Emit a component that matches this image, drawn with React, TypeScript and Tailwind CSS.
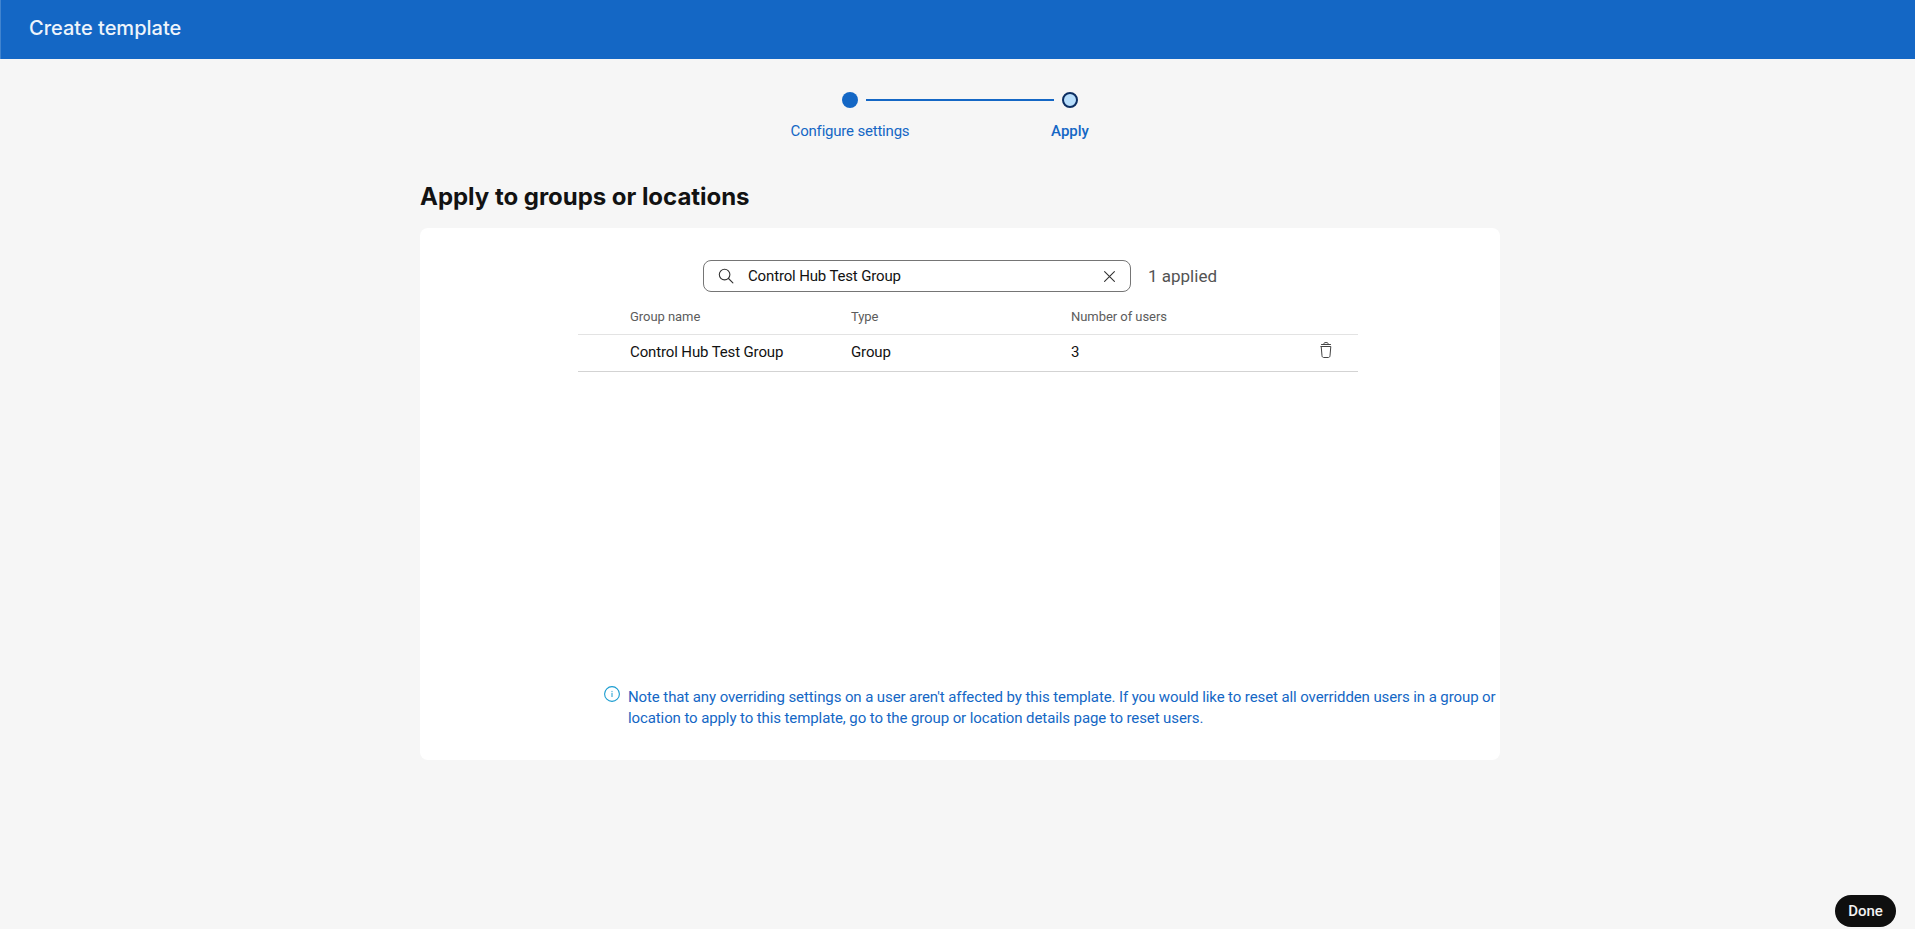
import React from "react";

const groups = [{ name: "Control Hub Test Group", type: "Group", users: 3 }];

export default function App() {
  return (
    <div className="h-screen w-full flex flex-col bg-[#f6f6f6] text-[#121212] font-['Roboto',sans-serif] overflow-hidden">
      {/* Header */}
      <header className="h-[59px] shrink-0 bg-[#1467c5] border-l border-[#4184cf] pl-[28px] pt-[14px]">
        <h1 className="text-xl leading-7 font-medium text-[#eef4fb] font-['Inter',sans-serif]">Create template</h1>
      </header>

      {/* Stepper */}
      <div className="ml-[740px] mt-[33px] flex shrink-0">
        <Step label="Configure settings" />
        <Step label="Apply" current />
      </div>

      {/* Content */}
      <main className="ml-[420px] mt-[40px] w-[1080px] shrink-0">
        <h2 className="text-2xl leading-8 font-bold tracking-[-0.03px] font-['Inter',sans-serif]">Apply to groups or locations</h2>

        <section className="mt-[15px] h-[532px] rounded-lg bg-white pt-8 flex flex-col">
          <div className="ml-[283px] flex items-center">
            <div className="w-[428px] h-8 shrink-0 flex items-center rounded-lg border border-[#757575] pl-[14px] pr-[15px]">
              <SearchIcon />
              <span className="ml-[14px] flex-1 text-[15px] leading-5 tracking-[-0.15px]">Control Hub Test Group</span>
              <CloseIcon />
            </div>
            <span className="ml-[17px] text-[17px] leading-5 text-[#535353]">1 applied</span>
          </div>

          <div className="ml-[158px] w-[780px]">
            <div className="h-[43px] pt-[7px] flex items-center pl-[52px] border-b border-[#e3e3e3] text-[13px] tracking-[-0.05px] text-[#5c5c5c]">
              <span className="w-[221px]">Group name</span>
              <span className="w-[220px]">Type</span>
              <span>Number of users</span>
            </div>
            {groups.map((g) => (
              <div key={g.name} className="h-[37px] pb-[2px] flex items-center pl-[52px] pr-[24px] border-b border-[#d3d3d3] text-[15px] tracking-[-0.13px]">
                <span className="w-[221px]">{g.name}</span>
                <span className="w-[220px]">{g.type}</span>
                <span className="flex-1">{g.users}</span>
                <TrashIcon />
              </div>
            ))}
          </div>

          <div className="mt-auto mb-[31px] ml-[184px] flex items-start text-[#1467c5]">
            <InfoIcon />
            <p className="ml-2 pt-px text-[15px] leading-[21px] tracking-[-0.1px] whitespace-nowrap">
              Note that any overriding settings on a user aren't affected by this template. If you would like to reset all overridden users in a group or
              <br />
              location to apply to this template, go to the group or location details page to reset users.
            </p>
          </div>
        </section>
      </main>

      {/* Footer */}
      <footer className="mt-auto mb-[2px] mr-[19px] flex justify-end">
        <button className="w-[61px] h-8 rounded-full bg-[#0f0f0f] text-[15px] font-medium text-[#f3f3f3]">Done</button>
      </footer>
    </div>
  );
}

function Step({ label, current = false }: { label: string; current?: boolean }) {
  return (
    <div className="w-[220px] flex flex-col">
      <div className="h-4 flex items-center pl-[102px]">
        <div className={`w-4 h-4 shrink-0 rounded-full ${current ? "bg-[#b8defc] border-2 border-[#0d2f63]" : "bg-[#1467c5]"}`}></div>
        {!current && <div className="ml-2 w-[188px] h-0.5 shrink-0 bg-[#1467c5] -mr-[94px]"></div>}
      </div>
      <span className={`mt-[13px] text-center text-[15px] leading-5 text-[#1467c5] ${current ? "font-medium" : "tracking-[-0.2px]"}`}>{label}</span>
    </div>
  );
}

function SearchIcon() {
  return (
    <svg className="w-4 h-4 shrink-0" viewBox="0 0 16 16" fill="none" stroke="#333" strokeWidth="1.1" strokeLinecap="round">
      <circle cx="6.6" cy="6.6" r="5.3" />
      <path d="M10.5 10.5l4.4 4.4" />
    </svg>
  );
}

function CloseIcon() {
  return (
    <svg className="w-[11px] h-[11px] shrink-0" viewBox="0 0 11 11" fill="none" stroke="#333" strokeWidth="1.1" strokeLinecap="round">
      <path d="M.6.6l9.8 9.8M10.4.6L.6 10.4" />
    </svg>
  );
}

function TrashIcon() {
  return (
    <svg className="w-4 h-4 mb-1 shrink-0" viewBox="0 0 16 16" fill="none" stroke="#444" strokeLinecap="round" strokeLinejoin="round">
      <path d="M3.5 2.5h9M5.8 2.3c0-1.1.5-1.7 1.2-1.7h2c.7 0 1.2.6 1.2 1.7" />
      <path d="M3.2 4.5h9.6l-.8 9.3c-.1 1-.7 1.7-1.6 1.7H5.6c-.9 0-1.5-.7-1.6-1.7L3.2 4.5z" />
    </svg>
  );
}

function InfoIcon() {
  return (
    <svg className="w-4 h-4 shrink-0" viewBox="0 0 16 16" fill="none" stroke="#1a9cd0">
      <circle cx="8" cy="8" r="7.4" strokeWidth="1.1" />
      <path d="M8 6.8v4.2M8 4.9v1" />
    </svg>
  );
}
